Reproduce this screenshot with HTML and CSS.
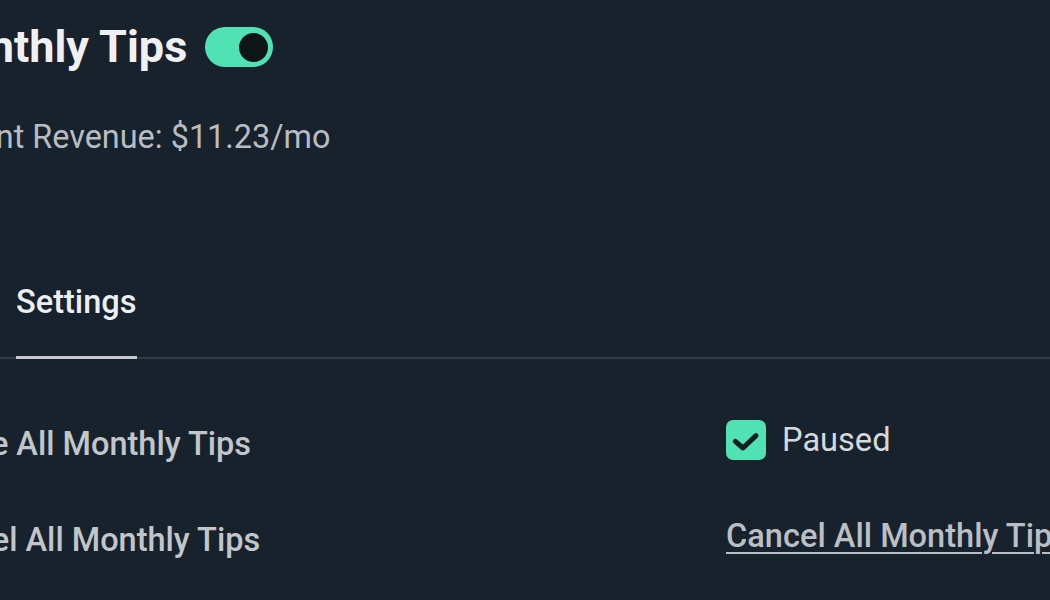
FILE: index.html
```html
<!DOCTYPE html>
<html lang="en">
<head>
<meta charset="utf-8">
<title>Monthly Tips Settings</title>
<link rel="stylesheet" href="styles.css">
</head>
<body>
<main class="page">
  <header class="header">
    <h1 class="title">Monthly Tips</h1>
    <span class="toggle" role="switch" aria-checked="true"><span class="knob"></span></span>
  </header>
  <p class="revenue">Current Revenue: $11.23/mo</p>
  <nav class="tabs">
    <span class="tab active">Settings</span>
  </nav>
  <section class="settings">
    <div class="label">Pause All Monthly Tips</div>
    <div class="control">
      <span class="checkbox">
        <svg viewBox="0 0 24 24" width="40" height="40" aria-hidden="true"><polyline points="5.6,12.8 10.2,16.8 18,9.4" fill="none" stroke="#10201f" stroke-width="3" stroke-linecap="round" stroke-linejoin="round"/></svg>
      </span>
      <span class="check-label">Paused</span>
    </div>
    <div class="label">Cancel All Monthly Tips</div>
    <div class="control">
      <a class="link" href="#">Cancel All Monthly Tips</a>
    </div>
  </section>
</main>
</body>
</html>
```

FILE: styles.css
```css
html, body {
  margin: 0;
  padding: 0;
  background: #18222c;
  overflow: hidden;
  height: 600px;
}

.page {
  margin-left: -82px;
  padding-top: 21px;
  font-family: Roboto, "Noto Sans", sans-serif;
  white-space: nowrap;
}

.header {
  display: flex;
  align-items: center;
  gap: 18px;
  padding-left: 6px;
}

.title {
  margin: 0;
  font-size: 45px;
  line-height: 52px;
  font-weight: 700;
  color: #eef0f2;
}

.toggle {
  width: 68px;
  height: 40px;
  border-radius: 20px;
  background: #50e2b3;
  display: flex;
  align-items: center;
  justify-content: flex-end;
  padding-right: 5px;
  box-sizing: border-box;
}

.knob {
  width: 29px;
  height: 29px;
  border-radius: 50%;
  background: #0d1519;
}

.revenue {
  margin: 44px 0 0;
  font-size: 32.4px;
  line-height: 40px;
  color: #b7bdc3;
}

.tabs {
  margin-top: 125px;
  padding-left: 98px;
  display: flex;
  border-bottom: 2px solid #333d47;
}

.tab {
  font-size: 32.6px;
  line-height: 40px;
  font-weight: 500;
  color: #eceef0;
  padding-bottom: 34px;
  margin-bottom: -2px;
}

.tab.active {
  border-bottom: 3px solid #c5c9cd;
}

.settings {
  margin-top: 61px;
  display: grid;
  grid-template-columns: 808px 1fr;
  row-gap: 52px;
  align-items: start;
}

.label {
  font-size: 32.5px;
  line-height: 40px;
  font-weight: 500;
  color: #c1c6cb;
  padding-top: 4px;
}

.control {
  display: flex;
  align-items: center;
  gap: 16px;
  height: 40px;
}

.checkbox {
  width: 40px;
  height: 40px;
  border-radius: 7px;
  background: #50e2b3;
  display: flex;
}

.check-label {
  font-size: 32.6px;
  line-height: 40px;
  color: #d5d8dc;
}

.link {
  font-size: 32.6px;
  line-height: 40px;
  font-weight: 500;
  color: #b9bfc5;
  text-decoration: underline;
  text-decoration-thickness: 2px;
  text-underline-offset: 5px;
}
```
